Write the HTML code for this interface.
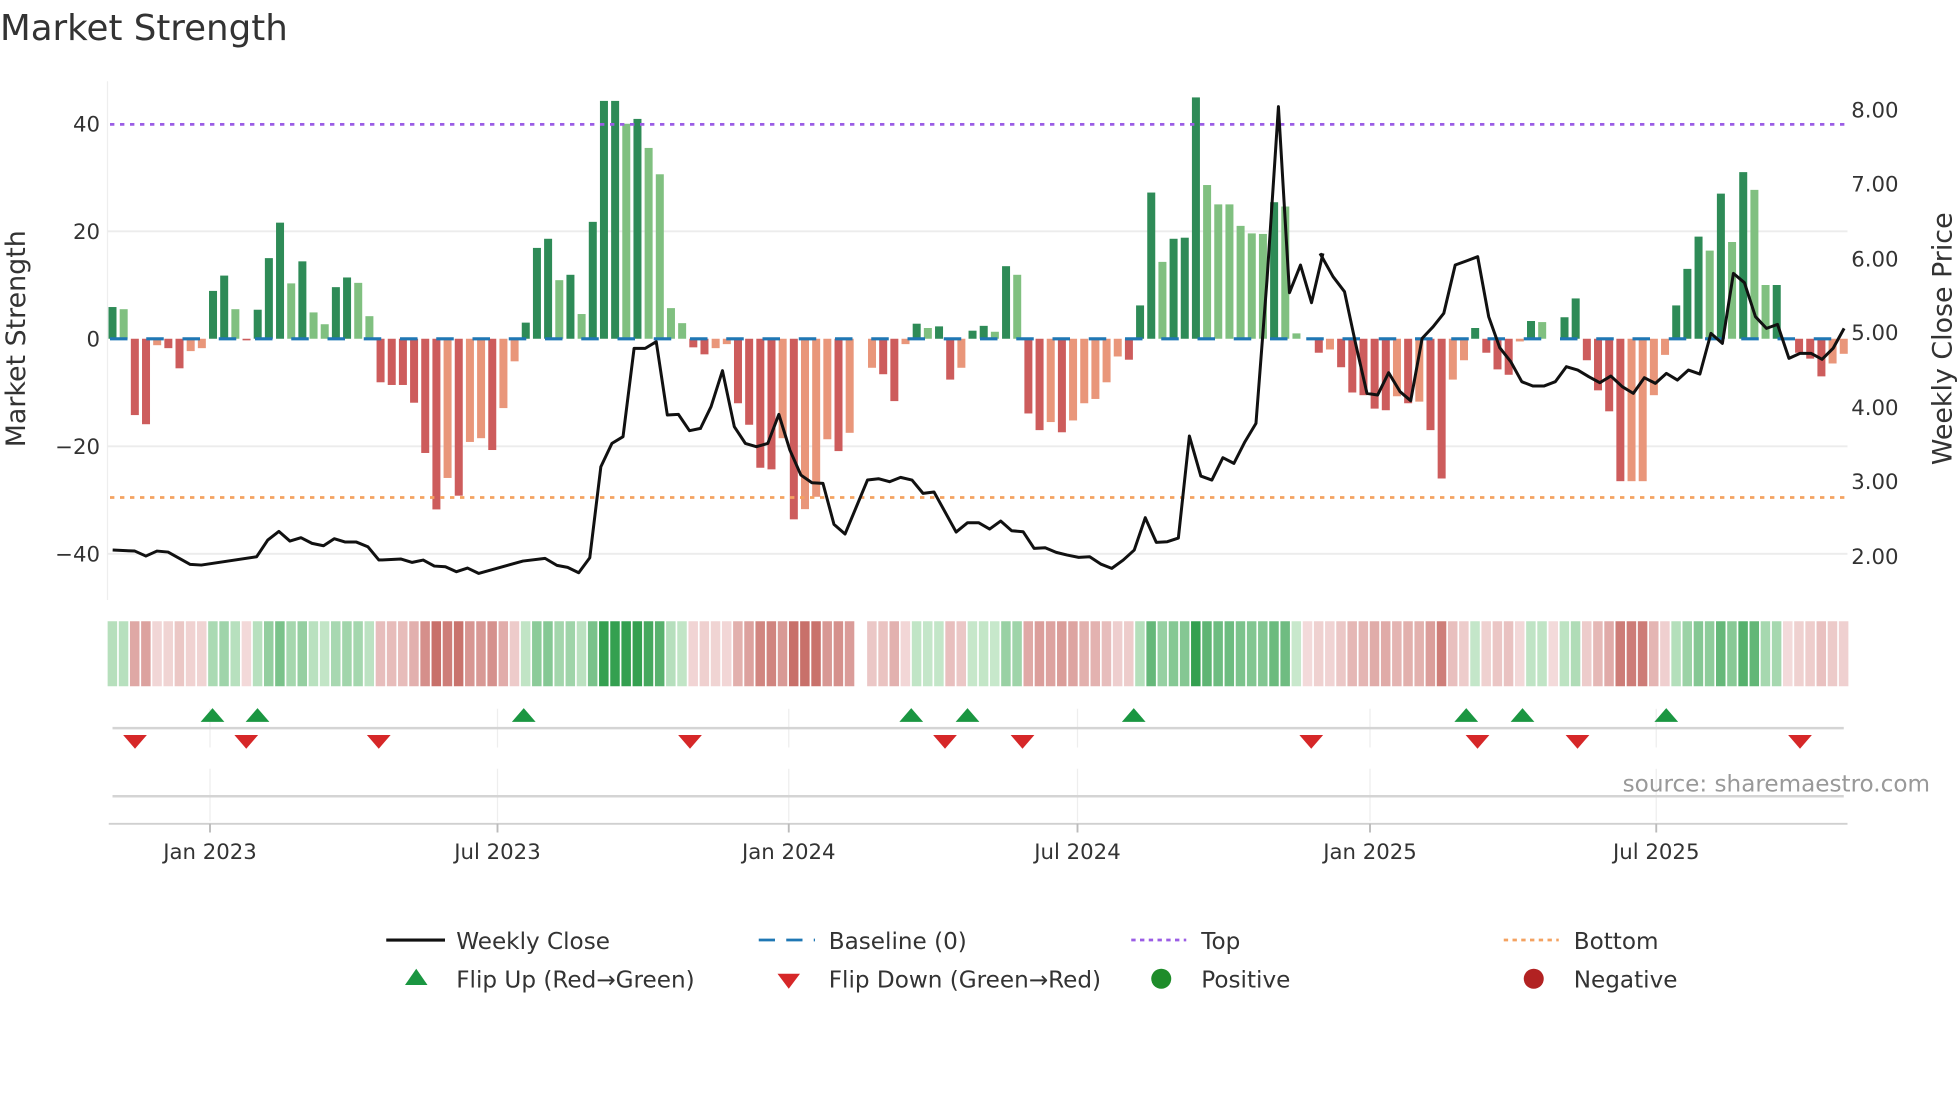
<!DOCTYPE html>
<html><head><meta charset="utf-8"><style>
html,body{margin:0;padding:0;background:#fff;}
svg{display:block;font-family:"DejaVu Sans","Liberation Sans",sans-serif;}
</style></head><body>
<svg id="s" width="1960" height="1102" viewBox="0 0 1568 881.6" xmlns="http://www.w3.org/2000/svg">
<rect width="1568" height="882" fill="#fff"/>
<text x="0" y="32" font-size="28.5" fill="#333">Market Strength</text>
<line x1="86" y1="65" x2="86" y2="480" stroke="#eee" stroke-width="1"/>
<g stroke="#ececec" stroke-width="1.5">
<line x1="86" y1="185" x2="1478" y2="185"/>
<line x1="86" y1="357" x2="1478" y2="357"/>
<line x1="86" y1="443" x2="1478" y2="443"/>
</g>
<g font-size="17" fill="#333" text-anchor="end">
<text x="80" y="105">40</text><text x="80" y="191">20</text><text x="80" y="277">0</text>
<text x="80" y="363">−20</text><text x="80" y="449">−40</text>
</g>
<g font-size="17" fill="#333">
<text x="1481" y="94">8.00</text><text x="1481" y="153">7.00</text><text x="1481" y="213">6.00</text>
<text x="1481" y="272">5.00</text><text x="1481" y="332">4.00</text><text x="1481" y="391">3.00</text><text x="1481" y="451">2.00</text>
</g>
<text transform="translate(20,271) rotate(-90)" font-size="21.5" fill="#333" text-anchor="middle">Market Strength</text>
<text transform="translate(1561,271) rotate(-90)" font-size="21.5" fill="#333" text-anchor="middle">Weekly Close Price</text>
<g id="bars"></g>
<line x1="88" y1="271" x2="1476" y2="271" stroke="#1f77b4" stroke-width="2.5" stroke-dasharray="14 15"/>
<line x1="88" y1="99.5" x2="1476" y2="99.5" stroke="#9b5de5" stroke-width="2.2" stroke-dasharray="3.5 4.5"/>
<line x1="88" y1="398" x2="1476" y2="398" stroke="#f4a261" stroke-width="2.2" stroke-dasharray="3.5 4.5"/>
<g fill="none" stroke="#111" stroke-linejoin="round">
<polyline vector-effect="non-scaling-stroke" stroke-width="3" transform="translate(80,64) scale(0.3165,0.2667)" points="32,1410 88,1413 116,1428 144,1413 172,1416 228,1453 256,1455 396,1430 424,1380 452,1354 480,1383 508,1373 536,1390 565,1397 592,1376 620,1386 648,1386 677,1400 705,1440 761,1437 789,1447 817,1440 845,1458 873,1460 901,1475 929,1464 957,1480 1069,1443 1125,1435 1155,1456 1182,1462 1210,1478 1238,1433 1266,1160 1294,1090 1322,1070 1350,805 1378,805 1406,785 1434,1005 1462,1003 1490,1052 1518,1045"/>
<polyline vector-effect="non-scaling-stroke" stroke-width="3" transform="translate(560,64) scale(0.3268,0.2667)" points="0,1048 27,980 55,872 84,1040 111,1090 138,1100 166,1090 193,1003 220,1110 247,1185 274,1208 301,1210 328,1333 355,1362 410,1200 437,1196 464,1205 491,1192 519,1200 546,1240 573,1236 627,1356 655,1328 682,1328 709,1347 736,1323 763,1352 791,1355 818,1405 845,1403 872,1417 899,1425 927,1432 954,1430 981,1452 1008,1465 1036,1440 1063,1410 1090,1313 1117,1387 1144,1385 1171,1374 1198,1068 1226,1188 1253,1200 1280,1133 1307,1150 1334,1085 1361,1030 1388,600 1416,80 1443,638 1470,555 1497,668 1525,520"/>
<polyline vector-effect="non-scaling-stroke" stroke-width="3" transform="translate(1056,64) scale(0.3268,0.2667)" points="0,520 32,590 60,635 87,790 115,940 141,945 168,878 196,935 222,962 250,775 277,740 303,700 331,555 358,543 386,530 413,710 440,803 467,845 494,905 521,918 548,918 576,905 603,860 631,870 658,890 685,908 712,888 740,920 767,940 794,893 821,910 848,880 875,900 902,870 930,882 957,760 985,790 1012,580 1039,608 1066,710 1093,745 1120,733 1148,835 1175,820 1202,820 1229,838 1256,805 1283,745"/>
</g>
<g id="heat"></g>
<g stroke="#eee" stroke-width="1">
<line x1="168" y1="567" x2="168" y2="598"/><line x1="398" y1="567" x2="398" y2="598"/><line x1="631" y1="567" x2="631" y2="598"/><line x1="862" y1="567" x2="862" y2="598"/><line x1="1096" y1="567" x2="1096" y2="598"/><line x1="1325" y1="567" x2="1325" y2="598"/>
<line x1="168" y1="615" x2="168" y2="657"/><line x1="398" y1="615" x2="398" y2="657"/><line x1="631" y1="615" x2="631" y2="657"/><line x1="862" y1="615" x2="862" y2="657"/><line x1="1096" y1="615" x2="1096" y2="657"/><line x1="1325" y1="615" x2="1325" y2="657"/>
</g>
<line x1="90" y1="582.5" x2="1475" y2="582.5" stroke="#d4d4d4" stroke-width="2"/>
<line x1="90" y1="637" x2="1475" y2="637" stroke="#d4d4d4" stroke-width="2"/>
<line x1="87" y1="659" x2="1478" y2="659" stroke="#d0d0d0" stroke-width="1.5"/>
<g stroke="#bbb" stroke-width="1.5">
<line x1="168" y1="659" x2="168" y2="666"/><line x1="398" y1="659" x2="398" y2="666"/><line x1="631" y1="659" x2="631" y2="666"/><line x1="862" y1="659" x2="862" y2="666"/><line x1="1096" y1="659" x2="1096" y2="666"/><line x1="1325" y1="659" x2="1325" y2="666"/>
</g>
<g id="marks"></g>
<text x="1544" y="633" font-size="18.5" fill="#999" text-anchor="end">source: sharemaestro.com</text>
<g font-size="17" fill="#333" text-anchor="middle">
<text x="168" y="687">Jan 2023</text><text x="398" y="687">Jul 2023</text><text x="631" y="687">Jan 2024</text>
<text x="862" y="687">Jul 2024</text><text x="1096" y="687">Jan 2025</text><text x="1325" y="687">Jul 2025</text>
</g>
<g font-size="18.5" fill="#333">
<line x1="309" y1="752" x2="356" y2="752" stroke="#111" stroke-width="2.5"/>
<text x="365" y="759">Weekly Close</text>
<line x1="607" y1="752" x2="652" y2="752" stroke="#1f77b4" stroke-width="2.2" stroke-dasharray="13 9"/>
<text x="663" y="759">Baseline (0)</text>
<line x1="905" y1="752" x2="949" y2="752" stroke="#9b5de5" stroke-width="2.2" stroke-dasharray="3.5 3.5"/>
<text x="961" y="759">Top</text>
<line x1="1203" y1="752" x2="1247" y2="752" stroke="#f4a261" stroke-width="2.2" stroke-dasharray="3.5 3.5"/>
<text x="1259" y="759">Bottom</text>
<polygon points="324,788 342,788 333,775" fill="#1a9641"/>
<text x="365" y="790">Flip Up (Red→Green)</text>
<polygon points="622,779 640,779 631,791" fill="#d62728"/>
<text x="663" y="790">Flip Down (Green→Red)</text>
<circle cx="929" cy="783" r="8" fill="#1e8c2a"/>
<text x="961" y="790">Positive</text>
<circle cx="1227" cy="783" r="8" fill="#b22222"/>
<text x="1259" y="790">Negative</text>
</g>
</svg>
<script>
var D=[[5.9,'d'],[5.5,'l'],[-14.2,'r'],[-15.9,'r'],[-1.2,'o'],[-1.75,'r'],[-5.5,'r'],[-2.3,'o'],[-1.75,'o'],[8.9,'d'],[11.75,'d'],[5.5,'l'],[-0.3,'r'],[5.4,'d'],[15,'d'],[21.6,'d'],[10.3,'l'],[14.4,'d'],[4.9,'l'],[2.7,'l'],[9.6,'d'],[11.4,'d'],[10.4,'l'],[4.2,'l'],[-8.1,'r'],[-8.6,'r'],[-8.6,'r'],[-11.9,'r'],[-21.25,'r'],[-31.75,'r'],[-25.9,'o'],[-29.2,'r'],[-19.2,'o'],[-18.5,'o'],[-20.7,'r'],[-12.9,'o'],[-4.2,'o'],[3,'d'],[16.9,'d'],[18.6,'d'],[10.9,'l'],[11.9,'d'],[4.6,'l'],[21.75,'d'],[44.25,'d'],[44.25,'d'],[40,'l'],[40.9,'d'],[35.5,'l'],[30.6,'l'],[5.7,'l'],[2.9,'l'],[-1.6,'r'],[-2.9,'r'],[-1.75,'o'],[-1,'o'],[-12,'r'],[-16,'r'],[-24,'r'],[-24.3,'r'],[-18.5,'o'],[-33.6,'r'],[-31.7,'o'],[-29.4,'o'],[-18.7,'o'],[-20.9,'r'],[-17.5,'o'],[0,'o'],[-5.4,'o'],[-6.6,'r'],[-11.6,'r'],[-1,'o'],[2.8,'d'],[2,'l'],[2.3,'d'],[-7.6,'r'],[-5.4,'o'],[1.5,'d'],[2.4,'d'],[1.3,'l'],[13.5,'d'],[11.9,'l'],[-13.9,'r'],[-17,'r'],[-15.5,'o'],[-17.4,'r'],[-15.2,'o'],[-12,'o'],[-11.2,'o'],[-8.1,'o'],[-3.3,'o'],[-3.9,'r'],[6.2,'d'],[27.2,'d'],[14.3,'l'],[18.6,'d'],[18.8,'d'],[44.9,'d'],[28.6,'l'],[25,'l'],[25,'l'],[21,'l'],[19.6,'l'],[19.5,'l'],[25.4,'d'],[24.6,'l'],[1,'l'],[0,'o'],[-2.6,'r'],[-2,'o'],[-5.3,'r'],[-10,'r'],[-10.5,'r'],[-13,'r'],[-13.3,'r'],[-10.7,'o'],[-12,'r'],[-11.7,'o'],[-17,'r'],[-26,'r'],[-7.6,'o'],[-4,'o'],[2,'d'],[-2.6,'r'],[-5.7,'r'],[-6.7,'r'],[-0.5,'o'],[3.3,'d'],[3.1,'l'],[0,'o'],[4,'d'],[7.5,'d'],[-4,'r'],[-9.6,'r'],[-13.5,'r'],[-26.5,'r'],[-26.5,'o'],[-26.5,'o'],[-10.5,'o'],[-3,'o'],[6.2,'d'],[13,'d'],[19,'d'],[16.4,'l'],[27,'d'],[18,'l'],[31,'d'],[27.7,'l'],[10,'l'],[10,'d'],[0,'o'],[-2.6,'r'],[-3.7,'r'],[-7,'r'],[-4.6,'o'],[-2.8,'o']];
var C={d:'#2e8b57',l:'#80c080',r:'#cd5c5c',o:'#e9967a'};
var b='',h='',sp=(1475-90)/155;
function mix(a,c,t){return 'rgb('+a.map(function(x,k){return Math.round(x+(c[k]-x)*t)}).join(',')+')';}
for(var i=0;i<D.length;i++){var v=D[i][0],x=90+i*sp;
 if(v!==0){var hh=Math.abs(v)*4.3,y=v>0?271-hh:271;b+='<rect x="'+(x-3.2).toFixed(2)+'" y="'+y.toFixed(2)+'" width="6.4" height="'+hh.toFixed(2)+'" fill="'+C[D[i][1]]+'"/>';}
 var col;if(v>0){col=mix([204,234,207],[52,160,80],Math.min(1,v/40));}else if(v<0){col=mix([243,218,218],[200,112,106],Math.min(1,-v/30));}else col=(i===67?'#fff':'#f3dada');
 h+='<rect x="'+(x-3.9).toFixed(2)+'" y="497" width="7.6" height="52" fill="'+col+'"/>';}
document.getElementById('bars').innerHTML=b;document.getElementById('heat').innerHTML=h;
var m='',U=[170,206,419,729,774,907,1173,1218,1333],Dn=[108,197,303,552,756,818,1049,1182,1262,1440];
U.forEach(function(x){m+='<polygon points="'+(x-9.5)+',577.5 '+(x+9.5)+',577.5 '+x+',566.5" fill="#1a9641"/>';});
Dn.forEach(function(x){m+='<polygon points="'+(x-9.5)+',588 '+(x+9.5)+',588 '+x+',599" fill="#d62728"/>';});
document.getElementById('marks').innerHTML=m;
</script>
</body></html>
